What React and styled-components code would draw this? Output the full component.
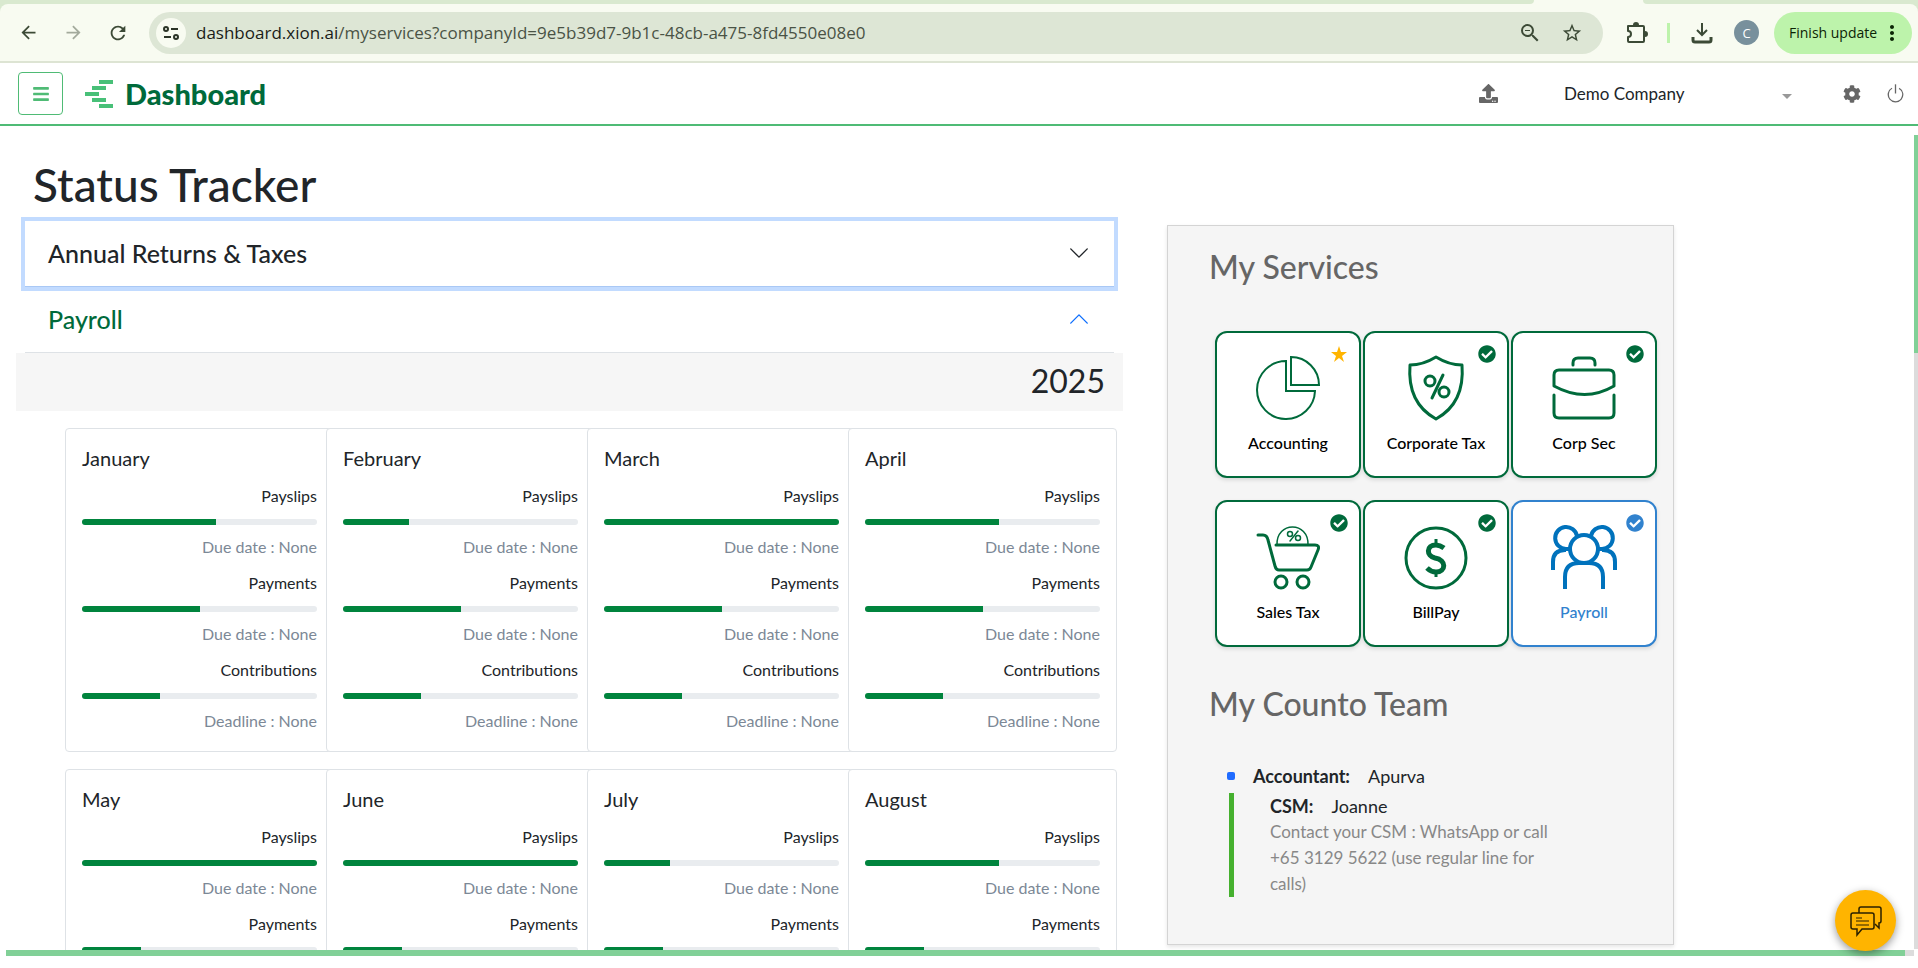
import styled, { createGlobalStyle } from 'styled-components';
import { useState } from 'react';
import { FaBars, FaCog, FaUpload, FaCheckCircle } from 'react-icons/fa';
import { MdArrowBack, MdArrowForward, MdRefresh, MdZoomOut, MdStarBorder, MdMoreVert } from 'react-icons/md';
import { BsPower, BsChevronDown } from 'react-icons/bs';

const colors = {
  green: '#4fbb75',
  dark: '#006a3b',
  bar: '#00843d',
  blue: '#3182ce',
  text: '#212529',
  muted: '#7c8896',
  title: '#666666',
  line: '#dee2e6',
  panel: '#f5f5f5',
  yellow: '#ffb400',
  scroll: '#81d097',
};

const GlobalStyle = createGlobalStyle`
  * {
    box-sizing: border-box;
  }
  body {
    margin: 0;
    overflow: hidden;
    background: white;
    color: ${colors.text};
    font-family: Lato, "Liberation Sans", sans-serif;
    font-size: 16px;
    line-height: 24px;
  }
  button, input, select {
    font-family: inherit;
    color: inherit;
  }
  h1, h2, h3, p, ul {
    margin: 0;
    padding: 0;
  }
`;

const Page = styled.div`
  height: 100vh;
  display: flex;
  flex-direction: column;
`;

/* browser */
const TabStrip = styled.div`
  height: 4px;
  flex-shrink: 0;
  display: flex;
  justify-content: space-between;
  background: #f8fbf1;
`;

const TabSpace = styled.div`
  width: ${(props) => props.$width};
  background: #d9e9cf;
  border-radius: ${(props) => props.$radius};
`;

const Chrome = styled.div`
  flex-shrink: 0;
  background: #d9e9cf;
`;

const Toolbar = styled.div`
  height: 59px;
  display: flex;
  align-items: center;
  padding: 0 6px 0 14px;
  background: #f8fbf1;
  border-bottom: 2px solid #dde4d3;
  border-radius: 8px 8px 0 0;
  font-family: "Open Sans", sans-serif;
`;

const NavButton = styled.button`
  width: 28px;
  height: 28px;
  margin-right: 17px;
  padding: 0;
  display: flex;
  align-items: center;
  justify-content: center;
  border: none;
  background: none;
  color: ${(props) => (props.disabled ? '#a3aa9c' : '#3c4a36')};
`;

const Address = styled.div`
  flex: 1;
  height: 42px;
  padding: 0 19px 0 7px;
  display: flex;
  align-items: center;
  gap: 18px;
  background: #dde6d5;
  border-radius: 21px;
`;

const SiteInfo = styled.button`
  width: 30px;
  height: 30px;
  padding: 0;
  display: flex;
  align-items: center;
  justify-content: center;
  border: none;
  border-radius: 50%;
  background: #f8fbf1;
`;

const Url = styled.div`
  flex: 1;
  margin-left: -8px;
  font-size: 17px;
  color: #4a5345;
  span {
    color: #1a1c18;
  }
`;

const ToolIcon = styled.button`
  width: 24px;
  height: 24px;
  padding: 0;
  display: flex;
  align-items: center;
  justify-content: center;
  border: none;
  background: none;
  color: #3c4a36;
`;

const Extras = styled.div`
  margin-left: 22px;
  display: flex;
  align-items: center;
`;

const Divider = styled.div`
  width: 3px;
  height: 20px;
  margin: 0 20px 0 18px;
  background: #bdf3ab;
`;

const Avatar = styled.button`
  width: 25px;
  height: 25px;
  margin: 0 15px 0 20px;
  padding: 0;
  border: none;
  border-radius: 50%;
  background: #78909c;
  color: white;
  font-size: 13px;
`;

const Update = styled.button`
  height: 42px;
  width: 138px;
  padding: 0 8px 0 15px;
  display: flex;
  align-items: center;
  justify-content: space-between;
  border: none;
  border-radius: 21px;
  background: #bdf3ab;
  color: #0b2405;
  font-size: 14px;
  white-space: nowrap;
`;

/* app header */
const Header = styled.header`
  height: 63px;
  flex-shrink: 0;
  display: flex;
  align-items: center;
  padding: 0 12px 0 18px;
  border-bottom: 2px solid ${colors.green};
`;

const MenuButton = styled.button`
  width: 45px;
  height: 43px;
  padding: 0;
  display: flex;
  align-items: center;
  justify-content: center;
  border: 1px solid ${colors.green};
  border-radius: 4px;
  background: white;
  color: ${colors.green};
`;

const Brand = styled.a`
  flex: 1;
  margin-left: 22px;
  display: flex;
  align-items: center;
  gap: 12px;
  color: ${colors.dark};
  font-size: 29px;
  font-weight: 900;
  text-decoration: none;
`;

const HeaderButton = styled.button`
  margin-left: ${(props) => props.$gap};
  padding: 0;
  display: flex;
  border: none;
  background: none;
  color: #666;
`;

const CompanySelect = styled.select`
  width: 236px;
  margin-left: 60px;
  padding: 0 6px;
  appearance: none;
  border: none;
  background: white;
  font-size: 17px;
  line-height: 24px;
`;

const Caret = styled.span`
  width: 10px;
  height: 5px;
  margin: 6px 0 0 -12px;
  background: #999;
  clip-path: polygon(0 0, 100% 0, 50% 100%);
  pointer-events: none;
`;

/* content */
const Scroller = styled.div`
  position: relative;
  flex: 1;
  min-height: 0;
  display: flex;
  flex-direction: column;
  padding: 0 4px 12px 0;
`;

const Content = styled.main`
  flex: 1;
  min-height: 0;
  overflow: auto;
  scrollbar-width: none;
  display: flex;
  align-items: flex-start;
  padding-left: 16px;
`;

const VerticalTrack = styled.div`
  position: absolute;
  top: 9px;
  right: 0;
  bottom: 19px;
  width: 4px;
  background: #dcdcdc;
`;

const VerticalThumb = styled.div`
  height: 218px;
  background: ${colors.scroll};
`;

const HorizontalTrack = styled.div`
  position: absolute;
  left: 6px;
  right: 4px;
  bottom: 12px;
  height: 6px;
  padding-right: 9px;
  background: #dcdcdc;
`;

const HorizontalThumb = styled.div`
  height: 6px;
  background: ${colors.scroll};
`;

const Tracker = styled.section`
  flex: 1;
`;

const PageTitle = styled.h1`
  padding: 29px 0 1px 17px;
  font-size: 46px;
  line-height: 60px;
  font-weight: 500;
`;

const AccordionButton = styled.button`
  position: relative;
  z-index: ${(props) => (props.$focus ? 1 : 0)};
  width: calc(100% - 18px);
  height: 66px;
  margin: ${(props) => (props.$focus ? '5px 9px 0' : '0 9px')};
  padding: 0 24px 2px 23px;
  display: flex;
  align-items: center;
  justify-content: space-between;
  border: none;
  border-bottom: 1px solid ${(props) => (props.$focus ? '#a9c8f5' : colors.line)};
  background: white;
  color: ${(props) => (props.$open ? colors.dark : colors.text)};
  box-shadow: ${(props) => (props.$focus ? '0 0 0 4px #c2dbff' : 'none')};
  font-size: 25px;
  font-weight: 500;
  svg {
    color: ${(props) => (props.$open ? '#0d6efd' : colors.text)};
    transform: ${(props) => (props.$open ? 'rotate(180deg)' : 'none')};
  }
`;

const Year = styled.h2`
  height: 58px;
  padding-right: 18px;
  background: #f6f6f6;
  font-size: 32px;
  line-height: 56px;
  font-weight: 400;
  text-align: right;
`;

const MonthRow = styled.div`
  margin: 17px 6px 0 49px;
  display: flex;
`;

const MonthCard = styled.article`
  flex: 1;
  height: 324px;
  padding: 15px 16px;
  border: 1px solid ${colors.line};
  border-radius: 4px;
  background: white;
  & + & {
    margin-left: -8px;
  }
`;

const MonthName = styled.h3`
  margin-bottom: 12px;
  font-size: 20px;
  line-height: 28px;
  font-weight: 400;
`;

const Task = styled.div`
  height: 87px;
  text-align: right;
`;

const TaskName = styled.p`
  line-height: 24px;
`;

const Bar = styled.div`
  height: 6px;
  margin: 11px 0 10px;
  overflow: hidden;
  border-radius: 3px;
  background: #e9ecef;
`;

const BarFill = styled.div`
  height: 6px;
  background: ${colors.bar};
`;

const Due = styled.p`
  color: ${colors.muted};
`;

/* services */
const Panel = styled.aside`
  width: 507px;
  height: 720px;
  margin: 99px 240px 0 44px;
  padding: 22px 14px 0 41px;
  border: 1px solid #d4d4d4;
  background: ${colors.panel};
  box-shadow: 0 2px 4px rgba(0, 0, 0, 0.1);
`;

const PanelTitle = styled.h2`
  color: ${colors.title};
  font-size: 32px;
  line-height: 38px;
  font-weight: 500;
`;

const Tiles = styled.div`
  margin: 45px 0 38px 6px;
  display: grid;
  grid-template-columns: repeat(3, 146px);
  gap: 22px 2px;
`;

const Tile = styled.button`
  position: relative;
  height: 147px;
  padding: 22px 0 0;
  display: flex;
  flex-direction: column;
  align-items: center;
  gap: 10px;
  border: 2px solid ${(props) => (props.$active ? colors.blue : colors.dark)};
  border-radius: 12px;
  background: white;
  box-shadow: 0 2px 4px rgba(0, 0, 0, 0.12);
  color: ${(props) => (props.$active ? colors.blue : 'black')};
  font-size: 16px;
  line-height: 24px;
  font-weight: 500;
`;

const Badge = styled.span`
  position: absolute;
  top: 12px;
  right: 11px;
  display: flex;
  color: ${(props) => props.$color};
`;

const Team = styled.ul`
  margin: 40px 0 0 18px;
  list-style: none;
  font-size: 18px;
`;

const Member = styled.li`
  display: flex;
  align-items: center;
  gap: 18px;
  line-height: 26px;
  b {
    font-weight: 700;
  }
`;

const Dot = styled.span`
  width: 8px;
  height: 8px;
  border-radius: 2px;
  background: #1f6bff;
`;

const Manager = styled.li`
  width: 335px;
  margin: 4px 0 0 2px;
  padding-left: 36px;
  border-left: 5px solid #45b02e;
`;

const Contact = styled.p`
  color: #888;
  font-size: 17px;
  line-height: 26px;
`;

const Chat = styled.button`
  position: absolute;
  right: 22px;
  bottom: 17px;
  width: 61px;
  height: 61px;
  padding: 0;
  display: flex;
  align-items: center;
  justify-content: center;
  border: none;
  border-radius: 50%;
  background: ${colors.yellow};
  box-shadow: 0 3px 8px rgba(0, 0, 0, 0.4);
`;

const Logo = () => (
  <svg width="28" height="28" viewBox="0 0 28 28" fill="#48c078">
    <rect x="14" y="0" width="14" height="4" />
    <rect x="7" y="6" width="14" height="4" />
    <rect x="0" y="12" width="14" height="4" />
    <rect x="7" y="18" width="14" height="4" />
    <rect x="14" y="24" width="14" height="4" />
  </svg>
);

const TuneIcon = () => (
  <svg width="18" height="18" viewBox="0 0 18 18" fill="none" stroke="#2b3427" strokeWidth="2">
    <circle cx="4" cy="5" r="2" />
    <path d="M9 5h7M2 13h7" />
    <circle cx="14" cy="13" r="2" />
  </svg>
);

const PuzzleIcon = () => (
  <svg width="24" height="24" viewBox="0 0 24 24" fill="none" stroke="currentColor" strokeWidth="2" strokeLinejoin="round">
    <path d="M3 5h15q1 0 1 1v14q0 1-1 1H4q-1 0-1-1v-4q3 0 3-3t-3-3z" />
    <path d="M9 4a2 2 0 0 1 4 0zM20 11a2 2 0 0 1 0 4z" fill="currentColor" />
  </svg>
);

const DownloadIcon = () => (
  <svg width="22" height="22" viewBox="0 0 22 22" fill="none" stroke="currentColor" strokeWidth="2">
    <path d="M11 1v12M6 8l5 5 5-5" />
    <path d="M2 15v3q0 2 2 2h14q2 0 2-2v-3" strokeWidth="3" />
  </svg>
);

const StarIcon = () => (
  <svg width="18" height="18" viewBox="0 0 18 18" fill="currentColor">
    <path d="M9 1l2 6h6l-5 4 2 6-5-4-5 4 2-6-5-4h6z" />
  </svg>
);

const PieIcon = () => (
  <svg width="66" height="66" viewBox="0 0 66 66" fill="none" stroke="#006a3b" strokeWidth="2">
    <path d="M31 6a29 29 0 1 0 29 30H31z" />
    <path d="M36 2v28h28A28 28 0 0 0 36 2z" />
  </svg>
);

const ShieldIcon = () => (
  <svg width="66" height="66" viewBox="0 0 66 66" fill="none" stroke="#006a3b" strokeWidth="3" strokeLinejoin="round">
    <path d="M33 2Q46 10 59 10Q62 48 33 64Q4 48 7 10Q20 10 33 2z" />
    <circle cx="27" cy="26" r="5" />
    <circle cx="41" cy="37" r="5" />
    <path d="M40 20L29 43" strokeLinecap="round" />
  </svg>
);

const CaseIcon = () => (
  <svg width="66" height="66" viewBox="0 0 66 66" fill="none" stroke="#006a3b" strokeWidth="3" strokeLinecap="round" strokeLinejoin="round">
    <path d="M22 10V8q0-5 5-5h12q5 0 5 5v2" />
    <path d="M3 31V20q0-5 5-5h50q5 0 5 5v11Q34 48 3 31z" />
    <path d="M3 40v18q0 5 5 5h50q5 0 5-5V40" />
  </svg>
);

const CartIcon = () => (
  <svg width="66" height="66" viewBox="0 0 66 66" fill="none" stroke="#006a3b" strokeWidth="3" strokeLinecap="round" strokeLinejoin="round">
    <path d="M3 11h5q4 0 5 5l7 26q1 4 4 4h28q3 0 4-3l7-17q2-5-3-5H21" />
    <circle cx="26" cy="58" r="6" />
    <circle cx="48" cy="58" r="6" />
    <path d="M22 21C21-3 54-3 53 21" strokeWidth="1.5" />
    <g strokeWidth="1.5">
      <circle cx="35" cy="10" r="2.5" />
      <circle cx="43" cy="14" r="2.5" />
      <path d="M43 7l-8 10" />
    </g>
  </svg>
);

const DollarIcon = () => (
  <svg width="66" height="66" viewBox="0 0 66 66" fill="none" stroke="#006a3b" strokeWidth="3">
    <circle cx="33" cy="34" r="30" />
    <path d="M41 24Q37 21 33 21C23 21 23 32 32 34C44 36 43 48 33 48Q28 48 24 44" strokeWidth="5" />
    <path d="M33 15v6M33 48v5" strokeWidth="3" />
  </svg>
);

const PeopleIcon = () => (
  <svg width="68" height="66" viewBox="0 0 68 66" fill="none" stroke="#0072bc" strokeWidth="4">
    <circle cx="34" cy="25" r="14" />
    <path d="M20 25h-4a11 11 0 1 1 11-13M48 25h4a11 11 0 1 0-11-13" />
    <path d="M16 26h-1Q3 26 3 38v8M52 26h1q12 0 12 12v8" />
    <path d="M15 65V53q0-14 14-14h10q14 0 14 14v12" />
  </svg>
);

const ChatIcon = () => (
  <svg width="32" height="32" viewBox="0 0 32 32" fill="none" stroke="#2b2100" strokeWidth="1.5">
    <path d="M9 8V4q0-2 2-2h18q2 0 2 2v12q0 2-2 2v5l-4-4" />
    <path d="M3 8h19q2 0 2 2v12q0 2-2 2H12l-5 6v-6H3q-2 0-2-2V10q0-2 2-2z" />
    <path d="M6 13h6M6 16h13M6 20h13" strokeWidth="1" />
  </svg>
);

const months = [
  [
    { name: 'January', values: [57, 50, 33] },
    { name: 'February', values: [28, 50, 33] },
    { name: 'March', values: [100, 50, 33] },
    { name: 'April', values: [57, 50, 33] },
  ],
  [
    { name: 'May', values: [100, 25, 33] },
    { name: 'June', values: [100, 25, 33] },
    { name: 'July', values: [28, 25, 33] },
    { name: 'August', values: [57, 25, 33] },
  ],
];

const tasks = [
  { name: 'Payslips', due: 'Due date : None' },
  { name: 'Payments', due: 'Due date : None' },
  { name: 'Contributions', due: 'Deadline : None' },
];

const services = [
  { name: 'Accounting', icon: <PieIcon />, star: true },
  { name: 'Corporate Tax', icon: <ShieldIcon /> },
  { name: 'Corp Sec', icon: <CaseIcon /> },
  { name: 'Sales Tax', icon: <CartIcon /> },
  { name: 'BillPay', icon: <DollarIcon /> },
  { name: 'Payroll', icon: <PeopleIcon />, active: true },
];

const Month = ({ name, values }) => (
  <MonthCard>
    <MonthName>{name}</MonthName>
    {tasks.map((task, i) => (
      <Task key={task.name}>
        <TaskName>{task.name}</TaskName>
        <Bar>
          <BarFill style={{ width: `${values[i]}%` }} />
        </Bar>
        <Due>{task.due}</Due>
      </Task>
    ))}
  </MonthCard>
);

const Service = ({ name, icon, star, active }) => (
  <Tile $active={active}>
    {icon}
    {name}
    <Badge $color={star ? colors.yellow : active ? colors.blue : colors.dark}>
      {star ? <StarIcon /> : <FaCheckCircle size={18} />}
    </Badge>
  </Tile>
);

const App = () => {
  const [open, setOpen] = useState(true);

  return (
    <Page>
      <GlobalStyle />
      <TabStrip>
        <TabSpace $width="80%" $radius="0 0 12px 0" />
        <TabSpace $width="275px" $radius="0 0 0 12px" />
      </TabStrip>
      <Chrome>
        <Toolbar>
          <NavButton aria-label="Back"><MdArrowBack size={21} /></NavButton>
          <NavButton aria-label="Forward" disabled><MdArrowForward size={21} /></NavButton>
          <NavButton aria-label="Reload"><MdRefresh size={22} /></NavButton>
          <Address>
            <SiteInfo aria-label="Site information"><TuneIcon /></SiteInfo>
            <Url><span>dashboard.xion.ai</span>/myservices?companyId=9e5b39d7-9b1c-48cb-a475-8fd4550e08e0</Url>
            <ToolIcon aria-label="Zoom"><MdZoomOut size={24} /></ToolIcon>
            <ToolIcon aria-label="Bookmark"><MdStarBorder size={22} /></ToolIcon>
          </Address>
          <Extras>
            <ToolIcon aria-label="Extensions"><PuzzleIcon /></ToolIcon>
            <Divider />
            <ToolIcon aria-label="Downloads"><DownloadIcon /></ToolIcon>
            <Avatar>C</Avatar>
            <Update>Finish update<MdMoreVert size={24} /></Update>
          </Extras>
        </Toolbar>
      </Chrome>
      <Header>
        <MenuButton aria-label="Menu"><FaBars size={18} /></MenuButton>
        <Brand href="#"><Logo />Dashboard</Brand>
        <HeaderButton aria-label="Upload"><FaUpload size={19} /></HeaderButton>
        <CompanySelect aria-label="Company">
          <option>Demo Company</option>
        </CompanySelect>
        <Caret />
        <HeaderButton aria-label="Settings" $gap="51px"><FaCog size={18} /></HeaderButton>
        <HeaderButton aria-label="Log out" $gap="24px"><BsPower size={21} /></HeaderButton>
      </Header>
      <Scroller>
        <Content>
          <Tracker>
            <PageTitle>Status Tracker</PageTitle>
            <AccordionButton $focus>
              Annual Returns &amp; Taxes
              <BsChevronDown size={22} />
            </AccordionButton>
            <AccordionButton $open={open} onClick={() => setOpen(!open)}>
              Payroll
              <BsChevronDown size={22} />
            </AccordionButton>
            {open && (
              <>
                <Year>2025</Year>
                {months.map((row) => (
                  <MonthRow key={row[0].name}>
                    {row.map((month) => <Month key={month.name} {...month} />)}
                  </MonthRow>
                ))}
              </>
            )}
          </Tracker>
          <Panel>
            <PanelTitle>My Services</PanelTitle>
            <Tiles>
              {services.map((service) => <Service key={service.name} {...service} />)}
            </Tiles>
            <PanelTitle>My Counto Team</PanelTitle>
            <Team>
              <Member>
                <Dot />
                <b>Accountant:</b>
                <span>Apurva</span>
              </Member>
              <Manager>
                <Member as="div">
                  <b>CSM:</b>
                  <span>Joanne</span>
                </Member>
                <Contact>Contact your CSM : WhatsApp or call +65 3129 5622 (use regular line for calls)</Contact>
              </Manager>
            </Team>
          </Panel>
        </Content>
        <VerticalTrack><VerticalThumb /></VerticalTrack>
        <HorizontalTrack><HorizontalThumb /></HorizontalTrack>
        <Chat aria-label="Chat"><ChatIcon /></Chat>
      </Scroller>
    </Page>
  );
};

export default App;
